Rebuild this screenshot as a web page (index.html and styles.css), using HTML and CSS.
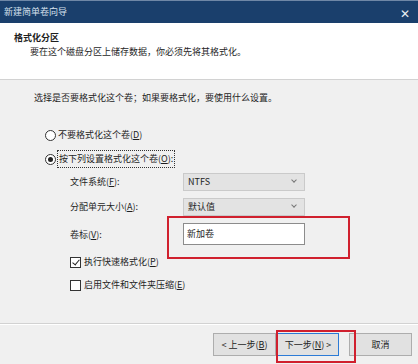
FILE: index.html
```html
<!DOCTYPE html>
<html lang="zh-CN">
<head>
    <meta charset="UTF-8">
    <title>新建简单卷向导</title>
    <link rel="stylesheet" href="styles.css">
</head>
<body>
    <div class="wizard">
        <div class="titlebar">
            <span class="title">新建简单卷向导</span>
            <span class="close">&#x2715;</span>
        </div>

        <div class="header">
            <div class="header-title">格式化分区</div>
            <div class="header-sub">要在这个磁盘分区上储存数据，你必须先将其格式化。</div>
        </div>

        <div class="body">
            <p class="intro">选择是否要格式化这个卷；如果要格式化，要使用什么设置。</p>

            <label class="radio"><span class="dot"></span>不要格式化这个卷(<u>D</u>)</label>
            <label class="radio checked"><span class="dot"></span><span class="focus">按下列设置格式化这个卷(<u>O</u>):</span></label>

            <div class="form">
                <span class="label">文件系统(<u>F</u>):</span>
                <div class="select">NTFS<span class="caret"></span></div>

                <span class="label">分配单元大小(<u>A</u>):</span>
                <div class="select">默认值<span class="caret"></span></div>

                <span class="label">卷标(<u>V</u>):</span>
                <div class="input-wrap">
                    <div class="input">新加卷</div>
                    <div class="mark mark-input"></div>
                </div>
            </div>

            <label class="check checked"><span class="box"></span>执行快速格式化(<u>P</u>)</label>
            <label class="check"><span class="box"></span>启用文件和文件夹压缩(<u>E</u>)</label>
        </div>

        <div class="footer">
            <button class="btn">&lt; 上一步(<u>B</u>)</button>
            <div class="next-wrap">
                <button class="btn primary">下一步(<u>N</u>) &gt;</button>
                <div class="mark mark-next"></div>
            </div>
            <button class="btn cancel">取消</button>
        </div>
    </div>
</body>
</html>
```

FILE: styles.css
```css
:root {
    --title-bg: #1a3f6c;
    --panel-bg: #f0f0f0;
    --text-color: #1e1e1e;
    --mark-red: #d0202e;
    --focus-blue: #2c7bd6;
}
body, html {
    margin: 0;
    padding: 0;
    font-family: "Noto Sans CJK SC", "Noto Sans", sans-serif;
    font-size: 9px;
    color: var(--text-color);
    background-color: var(--panel-bg);
}
u {
    text-decoration: underline;
    text-underline-offset: 1px;
}
.wizard {
    width: 418px;
    height: 364px;
    display: flex;
    flex-direction: column;
    overflow: hidden;
}
.titlebar {
    height: 23px;
    background-color: var(--title-bg);
    border-top: 1px solid #6f87a6;
    box-sizing: border-box;
    display: flex;
    align-items: center;
    justify-content: space-between;
    padding: 0 8px 0 4px;
    color: #d8e1ec;
}
.titlebar .title {
    font-size: 9px;
    line-height: 14px;
}
.titlebar .close {
    font-size: 12px;
    color: #e8eef5;
}
.header {
    height: 57px;
    background-color: #fff;
    border-bottom: 1px solid #d2d2d2;
    padding: 8px 0 0 14px;
    box-sizing: border-box;
    line-height: 14px;
}
.header-title {
    font-weight: 700;
}
.header-sub {
    padding-left: 16px;
}
.body {
    flex: 1;
    padding: 10px 0 0 34px;
    border-bottom: 1px solid #d2d2d2;
}
.intro {
    margin: 0 0 21px;
    line-height: 16px;
}
.radio, .check {
    display: flex;
    align-items: center;
    height: 16px;
    line-height: 16px;
}
.radio {
    margin-left: 11px;
}
.radio + .radio {
    margin-top: 8px;
}
.radio .dot {
    width: 11px;
    height: 11px;
    border: 1px solid #333;
    border-radius: 50%;
    box-sizing: border-box;
    margin-right: 2px;
    position: relative;
    background: #fff;
}
.radio.checked .dot::after {
    content: "";
    position: absolute;
    left: 2px;
    top: 2px;
    width: 5px;
    height: 5px;
    border-radius: 50%;
    background: #222;
}
.radio .focus {
    outline: 1px dotted #333;
    padding: 0 1px;
}
.form {
    display: grid;
    grid-template-columns: 113px 122px;
    grid-template-rows: 25px 25px 30px;
    align-items: center;
    margin: 2px 0 5px 36px;
}
.select {
    height: 18px;
    background: #e3e3e3;
    border: 1px solid #cacaca;
    box-sizing: border-box;
    padding-left: 4px;
    display: flex;
    align-items: center;
    justify-content: space-between;
    line-height: 16px;
}
.caret {
    width: 3px;
    height: 3px;
    border-right: 1px solid #777;
    border-bottom: 1px solid #777;
    transform: rotate(45deg);
    margin: 0 8px 3px 0;
}
.input-wrap {
    position: relative;
}
.input {
    height: 22px;
    background: #fff;
    border: 1px solid #8c8c8c;
    box-sizing: border-box;
    padding-left: 3px;
    line-height: 20px;
}
.mark {
    position: absolute;
    border: 2px solid var(--mark-red);
    box-sizing: border-box;
    pointer-events: none;
}
.mark-input {
    left: -16px;
    top: -7px;
    width: 183px;
    height: 43px;
}
.check {
    margin-left: 36px;
}
.check + .check {
    margin-top: 7px;
}
.check .box {
    width: 11px;
    height: 11px;
    border: 1px solid #333;
    box-sizing: border-box;
    background: #fff;
    margin-right: 3px;
    position: relative;
}
.check.checked .box::after {
    content: "";
    position: absolute;
    left: 3px;
    top: 0;
    width: 3px;
    height: 6px;
    border-right: 1px solid #222;
    border-bottom: 1px solid #222;
    transform: rotate(40deg);
}
.footer {
    height: 40px;
    border-top: 1px solid #fff;
    display: flex;
    align-items: center;
    padding: 0 6px 0 213px;
    box-sizing: border-box;
}
.btn {
    font-family: inherit;
    font-size: 9px;
    color: var(--text-color);
    height: 23px;
    width: 63px;
    background: #e1e1e1;
    border: 1px solid #adadad;
    padding: 0;
    line-height: 20px;
}
.next-wrap {
    position: relative;
    margin-left: 1px;
}
.btn.primary {
    width: 62px;
    border-color: var(--focus-blue);
}
.mark-next {
    left: -1px;
    top: -3px;
    width: 80px;
    height: 33px;
}
.btn.cancel {
    margin-left: auto;
}
```
